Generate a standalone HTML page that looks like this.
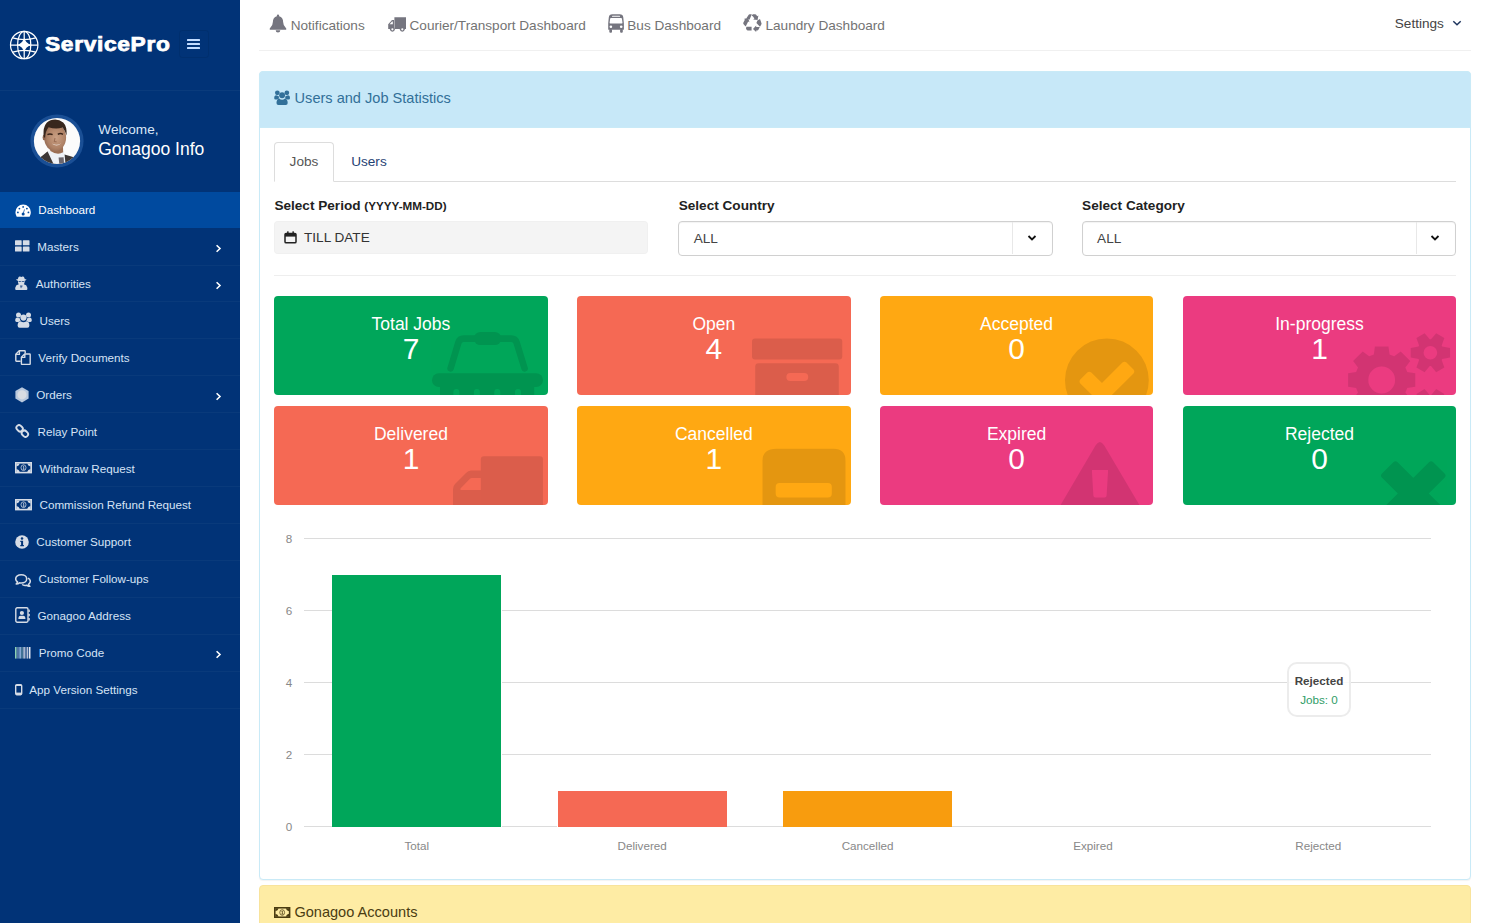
<!DOCTYPE html>
<html lang="en">
<head>
<meta charset="utf-8">
<title>ServicePro Dashboard</title>
<style>
html,body{margin:0;padding:0;background:#fff;}
body{width:1487px;height:923px;overflow:hidden;position:relative;font-family:"Liberation Sans",Arial,Helvetica,sans-serif;}
.b{position:absolute;box-sizing:border-box;display:block;}
.t{position:absolute;white-space:nowrap;margin:0;padding:0;}
aside,header,main,section{display:block;margin:0;padding:0;}
#page{position:absolute;left:0;top:0;width:1487px;height:923px;overflow:hidden;background:#fff;}

.sb{background:#013377;}
.mi{color:#d6e3f5;}
.card{border-radius:4px;overflow:hidden;}

</style>
</head>
<body>
<div id="page">
<aside id="sidebar">
<div class="b" style="left:0.00px;top:0.00px;width:240.00px;height:923.00px;background:#013377;"></div>
<svg class="b" style="left:9.00px;top:29.50px;transform:translate(0.2px,0)" width="30.00" height="30.00" viewBox="-15 -15 30 30">
<g fill="none" stroke="#fff" stroke-width="1.25">
<circle r="13.7"/>
<ellipse rx="6.6" ry="13.7"/>
<path d="M-13.7 0H13.7M0 -13.7V13.7"/>
<path d="M-11.6 -7.2Q0 -3.6 11.6 -7.2M-11.6 7.2Q0 3.6 11.6 7.2"/>
</g>
<path fill="#fff" d="M0 -7.5Q1.3 -1.3 7.5 0Q1.3 1.3 0 7.5Q-1.3 1.3 -7.5 0Q-1.3 -1.3 0 -7.5Z"/>
</svg>
<div class="t " style="left:45.30px;top:30.05px;font-size:20.4px;line-height:28.56px;color:#fff;font-weight:bold;letter-spacing:0.6px;-webkit-text-stroke:0.75px #fff;transform-origin:0 50%;transform:scaleX(1.115);">ServicePro</div>
<div class="b" style="left:179.00px;top:30.00px;width:30.00px;height:28.00px;border:1px solid rgba(0,0,0,0.07);border-radius:3px;"></div>
<div class="b" style="left:186.60px;top:39.30px;width:13.50px;height:2.00px;background:#c2dcff;border-radius:0.5px;"></div>
<div class="b" style="left:186.60px;top:43.30px;width:13.50px;height:2.00px;background:#c2dcff;border-radius:0.5px;"></div>
<div class="b" style="left:186.60px;top:47.30px;width:13.50px;height:2.00px;background:#c2dcff;border-radius:0.5px;"></div>
<div class="b" style="left:0.00px;top:89.60px;width:240.00px;height:1.00px;background:rgba(255,255,255,0.04);"></div>
<svg class="b" style="left:30.00px;top:114.10px;" width="54.00" height="54.00" viewBox="-27 -27 54 54">
<defs><clipPath id="av"><circle r="23.1"/></clipPath>
<radialGradient id="fg" cx="0.55" cy="0.5" r="0.7"><stop offset="0" stop-color="#caa084"/><stop offset="0.55" stop-color="#b08367"/><stop offset="1" stop-color="#7d5744"/></radialGradient></defs>
<circle r="26.6" fill="#1a4f95"/>
<g clip-path="url(#av)">
<rect x="-24" y="-24" width="48" height="48" fill="#fbfbfb"/>
<path d="M-19 24L-17 16.4Q-13 13.4 -9.6 10.4L-2 14L7.4 13.4Q13 14.6 17.6 16.6L20 24Z" fill="#3d3735"/>
<path d="M-9.4 10.6L-5.5 8.6L5.8 9.6L7.6 13.6L8.6 24L-3 24Z" fill="#eef1f6"/>
<path d="M1.6 16.6L6.6 16.2L7.2 24L2.4 24Z" fill="#6d676d"/>
<path d="M-7.6 3L5.8 3L6.2 11.2Q0.4 14.6 -6.6 10Z" fill="#9c6f54"/>
<ellipse cx="-1.9" cy="-3.4" rx="11" ry="13.5" fill="url(#fg)"/>
<ellipse cx="-12.9" cy="-3.6" rx="1.5" ry="2.8" fill="#93674f"/>
<path d="M-13.2 -3.4Q-15 -17.4 -6.4 -20.8Q0.6 -23 6.2 -18.6Q10.2 -14.8 9.6 -5.4Q8.2 -10.2 5.6 -13.4Q-1.6 -11.4 -8.4 -13.8Q-11.4 -10.4 -12 -3.4Z" fill="#38271d"/>
<path d="M-5.4 2.6Q-0.6 5 4.2 2.2Q0 6.6 -5.4 2.6Z" fill="#e9dcd4"/>
<path d="M-9.6 -6.4Q-7 -7.8 -4.4 -6.4M0.8 -6.7Q3.4 -8.1 6 -6.7" stroke="#3a2418" stroke-width="1.5" fill="none"/>
<path d="M-2 -3L-2.8 0.6L-0.4 0.8" stroke="#8f624a" stroke-width="0.8" fill="none"/>
</g>
</svg>
<div class="t " style="left:98.30px;top:120.17px;font-size:13.6px;line-height:19.04px;color:#dbe7f7;">Welcome,</div>
<div class="t " style="left:98.20px;top:136.69px;font-size:17.5px;line-height:24.5px;color:#fff;">Gonagoo Info</div>
<div class="b" style="left:0.00px;top:191.90px;width:240.00px;height:36.20px;background:#004a9f;"></div>
<svg class="b" style="left:14.80px;top:203.80px;" width="16.30" height="13.20" viewBox="0 0 16 13"><path fill="#fff" d="M8 0.6A7.6 7.6 0 0 0 0.4 8.2Q0.4 10.6 1.5 12.2Q1.8 12.6 2.3 12.6H13.7Q14.2 12.6 14.5 12.2Q15.6 10.6 15.6 8.2A7.6 7.6 0 0 0 8 0.6Z"/><g fill="#004a9f"><circle cx="8" cy="2.9" r="0.9"/><circle cx="4.3" cy="4.5" r="0.9"/><circle cx="11.7" cy="4.5" r="0.9"/><circle cx="2.8" cy="8.3" r="0.9"/><circle cx="13.2" cy="8.3" r="0.9"/><circle cx="8" cy="9.9" r="1.5"/><path d="M9 5.2L9.8 5.5L8.5 9.6L7.4 9.3Z" opacity=".7"/></g></svg>
<div class="t " style="left:38.30px;top:202.00px;font-size:11.66px;line-height:16.32px;color:#fff;">Dashboard</div>
<div class="b" style="left:0.00px;top:264.56px;width:240.00px;height:1.00px;background:rgba(255,255,255,0.035);"></div>
<svg class="b" style="left:15.30px;top:240.43px;" width="14.50" height="12.00" viewBox="0 0 15 12"><g fill="#d6dce6"><rect x="0" y="0" width="6.9" height="5.3" rx="0.6"/><rect x="8.1" y="0" width="6.9" height="5.3" rx="0.6"/><rect x="0" y="6.5" width="6.9" height="5.3" rx="0.6"/><rect x="8.1" y="6.5" width="6.9" height="5.3" rx="0.6"/></g></svg>
<div class="t " style="left:37.30px;top:238.93px;font-size:11.66px;line-height:16.32px;color:#d6e3f5;">Masters</div>
<svg class="b" style="left:214.60px;top:244.23px;" width="7.00" height="9.00" viewBox="0 0 7 9"><path d="M1.6 1.2L5 4.5L1.6 7.8" fill="none" stroke="#fff" stroke-width="1.6"/></svg>
<div class="b" style="left:0.00px;top:301.49px;width:240.00px;height:1.00px;background:rgba(255,255,255,0.035);"></div>
<svg class="b" style="left:15.10px;top:276.06px;" width="12.60" height="14.20" viewBox="0 0 12.6 14.2"><g fill="#d6dce6"><path d="M3.6 0.9Q4.3 0.1 5.1 0.6Q6.3 1.2 7.5 0.6Q8.3 0.1 9 0.9L9.9 3.3H11.2Q11.6 3.3 11.4 3.8Q10.6 4.6 9.6 4.8V6.2Q9.6 7.4 8.8 8.2Q11.8 8.8 12.3 11.4L12.4 13Q12.4 14 11.4 14H1.2Q0.2 14 0.2 13L0.3 11.4Q0.8 8.8 3.8 8.2Q3 7.4 3 6.2V4.8Q2 4.6 1.2 3.8Q1 3.3 1.4 3.3H2.7Z"/></g><g fill="#013377"><path d="M3.6 5.1H5.9V6H3.6ZM6.7 5.1H9V6H6.7Z" opacity=".7"/><path d="M5 9.4L5.9 12.6L6.3 10.2L6.7 12.6L7.6 9.4Z" opacity=".75"/></g></svg>
<div class="t " style="left:35.80px;top:275.86px;font-size:11.66px;line-height:16.32px;color:#d6e3f5;">Authorities</div>
<svg class="b" style="left:214.60px;top:281.16px;" width="7.00" height="9.00" viewBox="0 0 7 9"><path d="M1.6 1.2L5 4.5L1.6 7.8" fill="none" stroke="#fff" stroke-width="1.6"/></svg>
<div class="b" style="left:0.00px;top:338.42px;width:240.00px;height:1.00px;background:rgba(255,255,255,0.035);"></div>
<svg class="b" style="left:15.10px;top:312.39px;" width="17.00" height="16.00" viewBox="0 0 17 16"><g fill="#d6dce6"><circle cx="3.5" cy="2.9" r="2.5"/><circle cx="13.5" cy="2.9" r="2.5"/><circle cx="8.5" cy="5.6" r="3.1"/><path d="M0.2 8.6Q0.2 5.6 2.4 5.6Q3.4 6.4 4.9 6.2Q4.8 7.8 5.8 9Q4.4 9 3.6 10H1.6Q0.2 10 0.2 8.6Z"/><path d="M16.8 8.6Q16.8 5.6 14.6 5.6Q13.6 6.4 12.1 6.2Q12.2 7.8 11.2 9Q12.6 9 13.4 10H15.4Q16.8 10 16.8 8.6Z"/><path d="M2.6 13.6Q2.6 9.4 5.6 9.2Q7 10.2 8.5 10.2Q10 10.2 11.4 9.2Q14.4 9.4 14.4 13.6Q14.4 15.8 12.4 15.8H4.6Q2.6 15.8 2.6 13.6Z"/></g></svg>
<div class="t " style="left:39.50px;top:312.79px;font-size:11.66px;line-height:16.32px;color:#d6e3f5;">Users</div>
<div class="b" style="left:0.00px;top:375.35px;width:240.00px;height:1.00px;background:rgba(255,255,255,0.035);"></div>
<svg class="b" style="left:15.00px;top:350.02px;" width="16.00" height="15.20" viewBox="0 0 16 15.2"><g fill="none" stroke="#d6dce6" stroke-width="1.4" stroke-linejoin="round"><path d="M5.6 11.2H1.4Q0.8 11.2 0.8 10.6V4.2L4.2 0.8H9.6Q10.2 0.8 10.2 1.4V3.6"/><path d="M0.9 4.4H4.4V0.9"/><path d="M6.4 7.2L9.6 4H14.6Q15.2 4 15.2 4.6V13.8Q15.2 14.4 14.6 14.4H7Q6.4 14.4 6.4 13.8Z"/><path d="M6.5 7.4H9.8V4.1"/></g></svg>
<div class="t " style="left:38.30px;top:349.72px;font-size:11.66px;line-height:16.32px;color:#d6e3f5;">Verify Documents</div>
<div class="b" style="left:0.00px;top:412.28px;width:240.00px;height:1.00px;background:rgba(255,255,255,0.035);"></div>
<svg class="b" style="left:15.10px;top:387.25px;" width="14.00" height="15.60" viewBox="0 0 14 15.6"><path fill="#b9c8dd" d="M7 0.2L13.6 4V11.6L7 15.4L0.4 11.6V4Z"/><circle cx="7" cy="7.8" r="4.6" fill="#d9dce2"/></svg>
<div class="t " style="left:36.30px;top:386.65px;font-size:11.66px;line-height:16.32px;color:#d6e3f5;">Orders</div>
<svg class="b" style="left:214.60px;top:391.95px;" width="7.00" height="9.00" viewBox="0 0 7 9"><path d="M1.6 1.2L5 4.5L1.6 7.8" fill="none" stroke="#fff" stroke-width="1.6"/></svg>
<div class="b" style="left:0.00px;top:449.21px;width:240.00px;height:1.00px;background:rgba(255,255,255,0.035);"></div>
<svg class="b" style="left:15.30px;top:423.78px;" width="14.50" height="14.00" viewBox="0 0 14.5 14"><g fill="none" stroke="#d6dce6" stroke-width="1.9"><rect x="-3.4" y="-2.6" width="6.8" height="5.2" rx="2.6" transform="translate(4.6 4.3) rotate(45)"/><rect x="-3.4" y="-2.6" width="6.8" height="5.2" rx="2.6" transform="translate(9.9 9.7) rotate(45)"/></g></svg>
<div class="t " style="left:37.50px;top:423.58px;font-size:11.66px;line-height:16.32px;color:#d6e3f5;">Relay Point</div>
<div class="b" style="left:0.00px;top:486.14px;width:240.00px;height:1.00px;background:rgba(255,255,255,0.035);"></div>
<svg class="b" style="left:15.10px;top:462.31px;" width="17.00" height="11.40" viewBox="0 0 17 11.4"><rect x="0.8" y="0.8" width="15.4" height="9.8" fill="none" stroke="#d6dce6" stroke-width="1.6"/><path fill="#d6dce6" d="M1.4 1.4H4.8Q4.2 3.8 1.4 4.4ZM15.6 1.4H12.2Q12.8 3.8 15.6 4.4ZM1.4 10H4.8Q4.2 7.6 1.4 7ZM15.6 10H12.2Q12.8 7.6 15.6 7Z"/><ellipse cx="8.5" cy="5.7" rx="2.5" ry="2.9" fill="none" stroke="#d6dce6" stroke-width="0.9" opacity=".85"/><path d="M7.9 4.6L8.7 4.2V7.2M7.8 7.3H9.5" stroke="#d6dce6" stroke-width="0.8" fill="none"/></svg>
<div class="t " style="left:39.50px;top:460.51px;font-size:11.66px;line-height:16.32px;color:#d6e3f5;">Withdraw Request</div>
<div class="b" style="left:0.00px;top:523.07px;width:240.00px;height:1.00px;background:rgba(255,255,255,0.035);"></div>
<svg class="b" style="left:15.10px;top:499.24px;" width="17.00" height="11.40" viewBox="0 0 17 11.4"><rect x="0.8" y="0.8" width="15.4" height="9.8" fill="none" stroke="#d6dce6" stroke-width="1.6"/><path fill="#d6dce6" d="M1.4 1.4H4.8Q4.2 3.8 1.4 4.4ZM15.6 1.4H12.2Q12.8 3.8 15.6 4.4ZM1.4 10H4.8Q4.2 7.6 1.4 7ZM15.6 10H12.2Q12.8 7.6 15.6 7Z"/><ellipse cx="8.5" cy="5.7" rx="2.5" ry="2.9" fill="none" stroke="#d6dce6" stroke-width="0.9" opacity=".85"/><path d="M7.9 4.6L8.7 4.2V7.2M7.8 7.3H9.5" stroke="#d6dce6" stroke-width="0.8" fill="none"/></svg>
<div class="t " style="left:39.50px;top:497.44px;font-size:11.66px;line-height:16.32px;color:#d6e3f5;">Commission Refund Request</div>
<div class="b" style="left:0.00px;top:560.00px;width:240.00px;height:1.00px;background:rgba(255,255,255,0.035);"></div>
<svg class="b" style="left:15.10px;top:535.07px;" width="14.00" height="14.00" viewBox="0 0 14 14"><circle cx="7" cy="7" r="6.8" fill="#d6dce6"/><g fill="#013377"><circle cx="7" cy="3.5" r="1.25"/><path d="M5.3 5.8H8.1V10H8.9V11.2H5.3V10H6.1V7H5.3Z"/></g></svg>
<div class="t " style="left:36.30px;top:534.37px;font-size:11.66px;line-height:16.32px;color:#d6e3f5;">Customer Support</div>
<div class="b" style="left:0.00px;top:596.93px;width:240.00px;height:1.00px;background:rgba(255,255,255,0.035);"></div>
<svg class="b" style="left:15.10px;top:573.50px;" width="16.00" height="13.00" viewBox="0 0 16 13"><g fill="none" stroke="#d6dce6" stroke-width="1.55" stroke-linejoin="round"><path d="M6.2 0.8C9.3 0.8 11.7 2.6 11.7 4.9C11.7 7.2 9.3 9 6.2 9C5.6 9 5 8.9 4.5 8.8C3.6 9.5 2.4 9.9 1.2 10C2 9.2 2.4 8.5 2.5 7.9C1.4 7.1 0.7 6.1 0.7 4.9C0.7 2.6 3.1 0.8 6.2 0.8Z"/><path d="M12.9 4.1C14.4 4.8 15.3 6 15.3 7.3C15.3 8.5 14.6 9.5 13.5 10.3C13.6 10.9 14 11.6 14.8 12.4C13.6 12.3 12.4 11.9 11.5 11.2C10.3 11.5 8.3 11.4 7.1 10.5"/></g></svg>
<div class="t " style="left:38.50px;top:571.30px;font-size:11.66px;line-height:16.32px;color:#d6e3f5;">Customer Follow-ups</div>
<div class="b" style="left:0.00px;top:633.86px;width:240.00px;height:1.00px;background:rgba(255,255,255,0.035);"></div>
<svg class="b" style="left:15.10px;top:607.43px;" width="15.00" height="16.00" viewBox="0 0 15 16"><rect x="0.8" y="0.8" width="12.2" height="14.4" rx="1.4" fill="none" stroke="#d6dce6" stroke-width="1.4"/><g fill="#d6dce6"><rect x="13.4" y="2.6" width="1.4" height="2.4" rx="0.5"/><rect x="13.4" y="6.8" width="1.4" height="2.4" rx="0.5"/><rect x="13.4" y="11" width="1.4" height="2.4" rx="0.5"/><circle cx="6.9" cy="6" r="2.1"/><path d="M3.4 11.6Q3.4 8.7 5.6 8.7H8.2Q10.4 8.7 10.4 11.6V12H3.4Z"/></g></svg>
<div class="t " style="left:37.50px;top:608.23px;font-size:11.66px;line-height:16.32px;color:#d6e3f5;">Gonagoo Address</div>
<div class="b" style="left:0.00px;top:670.79px;width:240.00px;height:1.00px;background:rgba(255,255,255,0.035);"></div>
<svg class="b" style="left:15.20px;top:646.96px;" width="15.60" height="11.60" viewBox="0 0 15.6 11.6"><rect x="0" y="0" width="1.6" height="11.6" fill="#8fd0b5"/><rect x="2.6" y="0" width="0.8" height="11.6" fill="#c9d6ea"/><rect x="4.3" y="0" width="1.6" height="11.6" fill="#93b4dc"/><rect x="6.6" y="0" width="0.8" height="11.6" fill="#9fd0c0"/><rect x="8.3" y="0" width="1.6" height="11.6" fill="#b8c4d8"/><rect x="10.6" y="0" width="0.8" height="11.6" fill="#d5dae6"/><rect x="12.1" y="0" width="1.1" height="11.6" fill="#c9d0e0"/><rect x="13.9" y="0" width="1.6" height="11.6" fill="#dfe5f0"/></svg>
<div class="t " style="left:38.70px;top:645.16px;font-size:11.66px;line-height:16.32px;color:#d6e3f5;">Promo Code</div>
<svg class="b" style="left:214.60px;top:650.46px;" width="7.00" height="9.00" viewBox="0 0 7 9"><path d="M1.6 1.2L5 4.5L1.6 7.8" fill="none" stroke="#fff" stroke-width="1.6"/></svg>
<div class="b" style="left:0.00px;top:707.72px;width:240.00px;height:1.00px;background:rgba(255,255,255,0.035);"></div>
<svg class="b" style="left:15.20px;top:684.29px;" width="7.40" height="11.40" viewBox="0 0 7.4 11.4"><rect x="0.7" y="0.7" width="6" height="10" rx="1.1" fill="none" stroke="#d6dce6" stroke-width="1.4"/><rect x="1" y="8.6" width="5.4" height="2" fill="#d6dce6"/><rect x="1" y="0.8" width="5.4" height="1.2" fill="#d6dce6"/></svg>
<div class="t " style="left:29.30px;top:682.09px;font-size:11.66px;line-height:16.32px;color:#d6e3f5;">App Version Settings</div>
</aside>
<header id="topnav">
<svg class="b" style="left:268.50px;top:14.00px;" width="18.00" height="19.20" viewBox="0 0 18.6 19.2"><path fill="#75757f" d="M9.3 0.3Q10.5 0.3 10.5 1.5V2Q14.6 3 14.6 8Q14.6 12 17.6 14.4Q18.4 15.2 17.6 16H1Q0.2 15.2 1 14.4Q4 12 4 8Q4 3 8.1 2V1.5Q8.1 0.3 9.3 0.3ZM6.9 16.6H11.7Q11.6 18.9 9.3 18.9Q7 18.9 6.9 16.6Z"/></svg>
<div class="t " style="left:290.70px;top:16.37px;font-size:13.6px;line-height:19.04px;color:#737373;">Notifications</div>
<svg class="b" style="left:387.60px;top:17.00px;" width="18.60" height="15.00" viewBox="0 0 18.6 15"><g fill="#75757f"><path d="M6.4 0.2H17.8Q18.4 0.2 18.4 0.8V11.4Q18.4 12 17.8 12H6.4Z"/><path d="M0.2 7.2L3.6 3.4Q3.9 3.1 4.4 3.1H6V12H0.2Z"/><circle cx="4.4" cy="12.3" r="2.4"/><circle cx="14.3" cy="12.3" r="2.4"/></g><g fill="#fff"><path d="M1.6 7.2L4.1 4.4H4.8V7.2Z"/><circle cx="4.4" cy="12.3" r="1.1"/><circle cx="14.3" cy="12.3" r="1.1"/></g></svg>
<div class="t " style="left:409.50px;top:16.37px;font-size:13.6px;line-height:19.04px;color:#737373;">Courier/Transport Dashboard</div>
<svg class="b" style="left:607.90px;top:14.10px;" width="16.10" height="19.00" viewBox="0 0 16.1 19"><g fill="#75757f"><path d="M4.4 0.2H11.7Q15 0.2 15.3 3.4L15.9 9.6V15.2Q15.9 15.8 15.3 15.8H0.8Q0.2 15.8 0.2 15.2V9.6L0.8 3.4Q1.1 0.2 4.4 0.2Z"/><rect x="1.3" y="15" width="2.7" height="3.8" rx="1"/><rect x="12.1" y="15" width="2.7" height="3.8" rx="1"/></g><g fill="#fff"><path d="M3 3.9H13.1Q13.8 3.9 13.9 4.6L14.5 8.8Q14.6 9.5 13.9 9.5H2.2Q1.5 9.5 1.6 8.8L2.2 4.6Q2.3 3.9 3 3.9Z"/><rect x="4" y="1.7" width="8.1" height="1.1" rx="0.55"/><circle cx="2.9" cy="12.7" r="1.3"/><circle cx="13.2" cy="12.7" r="1.3"/></g></svg>
<div class="t " style="left:627.30px;top:16.37px;font-size:13.6px;line-height:19.04px;color:#737373;">Bus Dashboard</div>
<svg class="b" style="left:743.30px;top:14.00px;" width="18.80" height="17.80" viewBox="0 0 18.8 17.8"><g fill="#75757f"><path d="M3.6 4L5.7 0.8Q6 0.3 6.6 0.3H8.8L6.5 5.7Z"/><path d="M9.8 0.3H12.2Q12.8 0.3 13.2 0.8L14.2 2.2L15.4 1.4L14.6 6L10.2 5.6L11.4 4.6L10 2.6Q9.4 1.8 8.6 1.8Z"/><path d="M14.4 6.4L17 5L18.4 9Q18.8 9.8 18.3 10.6L17 12.8L13.4 9Z"/><path d="M10 14.9L13.2 11.4V13H16.8L15.4 15.8Q15 16.6 14.2 16.6H13.2V18Z"/><path d="M3.4 12.8H8.6V16.6H4.8Q4 16.6 3.6 15.8L3 14.6Z"/><path d="M0.3 8.8L2 5.6L0.8 5L5.2 3.8L6.4 8.2L5.2 7.6L3.2 11.4L2.6 12.6L0.6 10.2Q0 9.6 0.3 8.8Z"/></g></svg>
<div class="t " style="left:765.50px;top:16.37px;font-size:13.6px;line-height:19.04px;color:#737373;">Laundry Dashboard</div>
<div class="t " style="left:1394.80px;top:13.97px;font-size:13.6px;line-height:19.04px;color:#444;">Settings</div>
<svg class="b" style="left:1451.90px;top:19.00px;" width="10.00" height="8.00" viewBox="0 0 10 8"><path d="M1.3 2.2L5 5.7L8.7 2.2" fill="none" stroke="#1f355e" stroke-width="1.5"/></svg>
<div class="b" style="left:259.40px;top:50.00px;width:1212.00px;height:1.40px;background:#f0f0f0;"></div>
</header>
<main id="content">
<section id="stats-panel">
<div class="b" style="left:259.40px;top:70.60px;width:1212.00px;height:809.40px;border:1px solid #c9eaf7;border-radius:4px;background:#fff;box-shadow:0 1px 1px rgba(0,0,0,.05);"></div>
<div class="b" style="left:259.40px;top:70.60px;width:1212.00px;height:57.30px;background:#c7e8f8;border:1px solid #c9eaf7;border-radius:4px 4px 0 0;"></div>
<svg class="b" style="left:274.20px;top:90.40px;" width="16.20" height="15.20" viewBox="0 0 17 16"><g fill="#327099"><circle cx="3.5" cy="2.9" r="2.5"/><circle cx="13.5" cy="2.9" r="2.5"/><circle cx="8.5" cy="5.6" r="3.1"/><path d="M0.2 8.6Q0.2 5.6 2.4 5.6Q3.4 6.4 4.9 6.2Q4.8 7.8 5.8 9Q4.4 9 3.6 10H1.6Q0.2 10 0.2 8.6Z"/><path d="M16.8 8.6Q16.8 5.6 14.6 5.6Q13.6 6.4 12.1 6.2Q12.2 7.8 11.2 9Q12.6 9 13.4 10H15.4Q16.8 10 16.8 8.6Z"/><path d="M2.6 13.6Q2.6 9.4 5.6 9.2Q7 10.2 8.5 10.2Q10 10.2 11.4 9.2Q14.4 9.4 14.4 13.6Q14.4 15.8 12.4 15.8H4.6Q2.6 15.8 2.6 13.6Z"/></g></svg>
<div class="t " style="left:294.60px;top:87.75px;font-size:14.57px;line-height:20.4px;color:#327099;">Users and Job Statistics</div>
<div class="b" style="left:274.20px;top:181.00px;width:1181.40px;height:1.00px;background:#dddddd;"></div>
<div class="b" style="left:274.20px;top:141.60px;width:59.60px;height:40.40px;border:1px solid #ddd;border-bottom:1px solid #fff;border-radius:4px 4px 0 0;background:#fff;"></div>
<div class="t " style="left:289.60px;top:151.97px;font-size:13.6px;line-height:19.04px;color:#555;">Jobs</div>
<div class="t " style="left:351.20px;top:151.97px;font-size:13.6px;line-height:19.04px;color:#1f4273;">Users</div>
<div class="t " style="left:274.40px;top:196.47px;font-size:13.6px;line-height:19.04px;color:#222;font-weight:bold;">Select Period <span style="font-size:11.66px">(YYYY-MM-DD)</span></div>
<div class="b" style="left:274.20px;top:221.00px;width:374.20px;height:32.80px;background:#f4f4f4;border-radius:4px;box-shadow:inset 0 0 0 1px rgba(0,0,0,0.015);"></div>
<svg class="b" style="left:284.20px;top:231.20px;" width="13.00" height="12.60" viewBox="0 0 13 12.6"><rect x="1" y="2.4" width="11" height="9.4" rx="1.1" fill="none" stroke="#222" stroke-width="1.5"/><rect x="1" y="2.4" width="11" height="3.2" fill="#222"/><rect x="3.1" y="0.3" width="1.5" height="3" rx="0.5" fill="#222"/><rect x="8.4" y="0.3" width="1.5" height="3" rx="0.5" fill="#222"/></svg>
<div class="t " style="left:304.00px;top:227.77px;font-size:13.6px;line-height:19.04px;color:#333;">TILL DATE</div>
<div class="t " style="left:678.70px;top:196.47px;font-size:13.6px;line-height:19.04px;color:#222;font-weight:bold;">Select Country</div>
<div class="b" style="left:678.30px;top:221.30px;width:374.30px;height:34.60px;border:1.2px solid #d0d0d0;border-radius:4px;background:#fff;box-shadow:inset 0 1px 1px rgba(0,0,0,.05);"></div>
<div class="b" style="left:1012.40px;top:222.40px;width:1.00px;height:32.00px;background:#e8e8e8;"></div>
<div class="t " style="left:693.70px;top:228.77px;font-size:13.6px;line-height:19.04px;color:#444;">ALL</div>
<svg class="b" style="left:1027.00px;top:233.60px;" width="10.00" height="8.00" viewBox="0 0 10 8"><path d="M1.5 2L5 5.5L8.5 2" fill="none" stroke="#111" stroke-width="1.8"/></svg>
<div class="t " style="left:1082.10px;top:196.47px;font-size:13.6px;line-height:19.04px;color:#222;font-weight:bold;">Select Category</div>
<div class="b" style="left:1081.70px;top:221.30px;width:374.10px;height:34.60px;border:1.2px solid #d0d0d0;border-radius:4px;background:#fff;box-shadow:inset 0 1px 1px rgba(0,0,0,.05);"></div>
<div class="b" style="left:1415.60px;top:222.40px;width:1.00px;height:32.00px;background:#e8e8e8;"></div>
<div class="t " style="left:1097.10px;top:228.77px;font-size:13.6px;line-height:19.04px;color:#444;">ALL</div>
<svg class="b" style="left:1430.20px;top:233.60px;" width="10.00" height="8.00" viewBox="0 0 10 8"><path d="M1.5 2L5 5.5L8.5 2" fill="none" stroke="#111" stroke-width="1.8"/></svg>
<div class="b" style="left:274.20px;top:275.00px;width:1181.40px;height:1.20px;background:#eeeeee;"></div>
<div class="b card" style="left:274.00px;top:295.70px;width:273.90px;height:99.20px;background:#00a65a;"><svg class="b" style="left:0;top:0" width="273.90" height="99.20" viewBox="0 0 273.90 99.20"><g opacity="0.105"><path d="M176.6 72.4L184.4 46.5Q185.6 42.6 189.6 42.6H237.4Q241.4 42.6 242.6 46.5L250.6 72.4" fill="none" stroke="#000" stroke-width="6.6" stroke-linecap="round" stroke-linejoin="round"/><rect x="199.9" y="35.9" width="27.4" height="13.2" rx="6.6" fill="#000"/><rect x="158" y="77.3" width="111" height="13.7" rx="6.8" fill="#000"/><path fill="#000" fill-rule="evenodd" d="M166 90H260.2V101H166ZM179.4 101V96Q179.4 93 182.4 93Q185.4 93 185.4 96V101ZM199.9 101V96Q199.9 93 202.9 93Q205.9 93 205.9 96V101ZM220.3 101V96Q220.3 93 223.3 93Q226.3 93 226.3 96V101ZM241.0 101V96Q241.0 93 244.0 93Q247.0 93 247.0 96V101Z"/></g></svg><div class="t " style="left:-63.05px;width:400px;text-align:center;top:16.49px;font-size:17.5px;line-height:24.5px;color:#fff;">Total Jobs</div><div class="t " style="left:-63.05px;width:400px;text-align:center;top:32.61px;font-size:29.9px;line-height:41.86px;color:#fff;">7</div></div>
<div class="b card" style="left:577.00px;top:295.70px;width:273.80px;height:99.20px;background:#f56954;"><svg class="b" style="left:0;top:0" width="273.80" height="99.20" viewBox="0 0 273.80 99.20"><g fill="rgba(0,0,0,0.105)"><rect x="175" y="42.4" width="90.3" height="21.2" rx="3"/><path d="M178.2 70.6Q178.2 67.2 181.6 67.2H258.4Q261.8 67.2 261.8 70.6V100H178.2ZM213.4 77.1Q209.4 77.1 209.4 81.1Q209.4 85.1 213.4 85.1H227.2Q231.2 85.1 231.2 81.1Q231.2 77.1 227.2 77.1Z" fill-rule="evenodd"/></g></svg><div class="t " style="left:-63.10px;width:400px;text-align:center;top:16.49px;font-size:17.5px;line-height:24.5px;color:#fff;">Open</div><div class="t " style="left:-63.10px;width:400px;text-align:center;top:32.61px;font-size:29.9px;line-height:41.86px;color:#fff;">4</div></div>
<div class="b card" style="left:880.00px;top:295.70px;width:273.10px;height:99.20px;background:#ffa812;"><svg class="b" style="left:0;top:0" width="273.10" height="99.20" viewBox="0 0 273.10 99.20"><path fill="rgba(0,0,0,0.105)" fill-rule="evenodd" d="M226.9 42.4A41.9 41.9 0 1 0 226.9 126.2A41.9 41.9 0 1 0 226.9 42.4ZM246.5 66.4L253.5 73.4Q255 75.4 253.5 77.4L224 106.9Q222 108.4 220 106.9L200.3 87.4Q198.8 85.4 200.3 83.4L207.3 76.4Q209.3 74.9 211.3 76.4L222 87.1L242.5 66.4Q244.5 64.9 246.5 66.4Z"/></svg><div class="t " style="left:-63.45px;width:400px;text-align:center;top:16.49px;font-size:17.5px;line-height:24.5px;color:#fff;">Accepted</div><div class="t " style="left:-63.45px;width:400px;text-align:center;top:32.61px;font-size:29.9px;line-height:41.86px;color:#fff;">0</div></div>
<div class="b card" style="left:1183.00px;top:295.70px;width:273.00px;height:99.20px;background:#eb3b80;"><svg class="b" style="left:0;top:0" width="273.00" height="99.20" viewBox="0 0 273.00 99.20"><path fill="rgba(0,0,0,0.105)" fill-rule="evenodd" stroke="rgba(0,0,0,0.105)" stroke-width="0" stroke-linejoin="round" d="M224.3 76.1L232.3 77.2L232.3 90.8L224.3 91.9L222.4 96.5L227.3 103.0L217.7 112.6L211.2 107.7L206.6 109.6L205.5 117.6L191.9 117.6L190.8 109.6L186.2 107.7L179.7 112.6L170.1 103.0L175.0 96.5L173.1 91.9L165.1 90.8L165.1 77.2L173.1 76.1L175.0 71.5L170.1 65.0L179.7 55.4L186.2 60.3L190.8 58.4L191.9 50.4L205.5 50.4L206.6 58.4L211.2 60.3L217.7 55.4L227.3 65.0L222.4 71.5ZM212.1 84.0A13.4 13.4 0 1 0 185.3 84.0A13.4 13.4 0 1 0 212.1 84.0ZM259.3 50.5L267.1 52.0L267.1 61.4L259.3 62.9L258.7 63.9L261.4 71.4L253.2 76.2L248.0 70.1L246.8 70.1L241.6 76.2L233.4 71.4L236.1 63.9L235.5 62.9L227.7 61.4L227.7 52.0L235.5 50.5L236.1 49.5L233.4 42.0L241.6 37.2L246.8 43.3L248.0 43.3L253.2 37.2L261.4 42.0L258.7 49.5ZM254.2 56.7A6.8 6.8 0 1 0 240.6 56.7A6.8 6.8 0 1 0 254.2 56.7ZM259.3 106.4L267.1 107.9L267.1 117.3L259.3 118.8L258.7 119.8L261.4 127.3L253.2 132.1L248.0 126.0L246.8 126.0L241.6 132.1L233.4 127.3L236.1 119.8L235.5 118.8L227.7 117.3L227.7 107.9L235.5 106.4L236.1 105.4L233.4 97.9L241.6 93.1L246.8 99.2L248.0 99.2L253.2 93.1L261.4 97.9L258.7 105.4ZM254.2 112.6A6.8 6.8 0 1 0 240.6 112.6A6.8 6.8 0 1 0 254.2 112.6Z"/></svg><div class="t " style="left:-63.50px;width:400px;text-align:center;top:16.49px;font-size:17.5px;line-height:24.5px;color:#fff;">In-progress</div><div class="t " style="left:-63.50px;width:400px;text-align:center;top:32.61px;font-size:29.9px;line-height:41.86px;color:#fff;">1</div></div>
<div class="b card" style="left:274.00px;top:405.60px;width:273.90px;height:99.30px;background:#f56954;"><svg class="b" style="left:0;top:0" width="273.90" height="99.30" viewBox="0 0 273.90 99.30"><g fill="rgba(0,0,0,0.105)"><path d="M209.8 50.2H266Q269 50.2 269 53.2V100H206.8V53.2Q206.8 50.2 209.8 50.2Z"/><path fill-rule="evenodd" d="M179 95V83Q179 80 181 78L192 67Q194 64.5 197 64.5H206.8V100H179ZM186.5 84H206.8V72H198Q196.8 72 196 72.8L186.5 82.4Z"/></g></svg><div class="t " style="left:-63.05px;width:400px;text-align:center;top:16.49px;font-size:17.5px;line-height:24.5px;color:#fff;">Delivered</div><div class="t " style="left:-63.05px;width:400px;text-align:center;top:32.61px;font-size:29.9px;line-height:41.86px;color:#fff;">1</div></div>
<div class="b card" style="left:577.00px;top:405.60px;width:273.80px;height:99.30px;background:#ffa812;"><svg class="b" style="left:0;top:0" width="273.80" height="99.30" viewBox="0 0 273.80 99.30"><path fill="rgba(0,0,0,0.105)" fill-rule="evenodd" d="M199.5 42.7H256.5Q268.5 42.7 268.5 54.7V100H185.5V54.7Q185.5 42.7 199.5 42.7ZM202.7 77.1Q198.7 77.1 198.7 81.1V87.4Q198.7 91.4 202.7 91.4H250.8Q254.8 91.4 254.8 87.4V81.1Q254.8 77.1 250.8 77.1Z"/></svg><div class="t " style="left:-63.10px;width:400px;text-align:center;top:16.49px;font-size:17.5px;line-height:24.5px;color:#fff;">Cancelled</div><div class="t " style="left:-63.10px;width:400px;text-align:center;top:32.61px;font-size:29.9px;line-height:41.86px;color:#fff;">1</div></div>
<div class="b card" style="left:880.00px;top:405.60px;width:273.10px;height:99.30px;background:#eb3b80;"><svg class="b" style="left:0;top:0" width="273.10" height="99.30" viewBox="0 0 273.10 99.30"><path fill="rgba(0,0,0,0.105)" fill-rule="evenodd" d="M215.5 39.5Q219.9 32.5 224.3 39.5L260 100H180ZM212 63.9H228V66L226.6 89.5Q226.5 91.4 224.6 91.4H215.4Q213.5 91.4 213.4 89.5L212 66Z"/></svg><div class="t " style="left:-63.45px;width:400px;text-align:center;top:16.49px;font-size:17.5px;line-height:24.5px;color:#fff;">Expired</div><div class="t " style="left:-63.45px;width:400px;text-align:center;top:32.61px;font-size:29.9px;line-height:41.86px;color:#fff;">0</div></div>
<div class="b card" style="left:1183.00px;top:405.60px;width:273.00px;height:99.30px;background:#00a65a;"><svg class="b" style="left:0;top:0" width="273.00" height="99.30" viewBox="0 0 273.00 99.30"><g opacity="0.105" transform="translate(230.3 87.5)"><path fill="#000" stroke="#000" stroke-width="6.0" stroke-linejoin="round" d="M0.00 -11.31L17.82 -29.13L29.13 -17.82L11.31 0.00L29.13 17.82L17.82 29.13L0.00 11.31L-17.82 29.13L-29.13 17.82L-11.31 0.00L-29.13 -17.82L-17.82 -29.13Z"/></g></svg><div class="t " style="left:-63.50px;width:400px;text-align:center;top:16.49px;font-size:17.5px;line-height:24.5px;color:#fff;">Rejected</div><div class="t " style="left:-63.50px;width:400px;text-align:center;top:32.61px;font-size:29.9px;line-height:41.86px;color:#fff;">0</div></div>
<div class="b" style="left:304.10px;top:826.30px;width:1126.90px;height:1.20px;background:#dcdcdc;"></div>
<div class="t " style="left:-107.80px;width:400px;text-align:right;top:818.90px;font-size:11.66px;line-height:16.32px;color:#888;">0</div>
<div class="b" style="left:304.10px;top:754.24px;width:1126.90px;height:1.20px;background:#dcdcdc;"></div>
<div class="t " style="left:-107.80px;width:400px;text-align:right;top:746.84px;font-size:11.66px;line-height:16.32px;color:#888;">2</div>
<div class="b" style="left:304.10px;top:682.18px;width:1126.90px;height:1.20px;background:#dcdcdc;"></div>
<div class="t " style="left:-107.80px;width:400px;text-align:right;top:674.78px;font-size:11.66px;line-height:16.32px;color:#888;">4</div>
<div class="b" style="left:304.10px;top:610.12px;width:1126.90px;height:1.20px;background:#dcdcdc;"></div>
<div class="t " style="left:-107.80px;width:400px;text-align:right;top:602.72px;font-size:11.66px;line-height:16.32px;color:#888;">6</div>
<div class="b" style="left:304.10px;top:538.06px;width:1126.90px;height:1.20px;background:#dcdcdc;"></div>
<div class="t " style="left:-107.80px;width:400px;text-align:right;top:530.66px;font-size:11.66px;line-height:16.32px;color:#888;">8</div>
<div class="b" style="left:331.97px;top:574.39px;width:169.64px;height:252.51px;background:#fff;"></div>
<div class="b" style="left:332.27px;top:574.69px;width:169.04px;height:252.21px;background:#00a65a;"></div>
<div class="t " style="left:216.79px;width:400px;text-align:center;top:837.70px;font-size:11.66px;line-height:16.32px;color:#888;">Total</div>
<div class="b" style="left:557.35px;top:790.57px;width:169.64px;height:36.33px;background:#fff;"></div>
<div class="b" style="left:557.65px;top:790.87px;width:169.04px;height:36.03px;background:#f56954;"></div>
<div class="t " style="left:442.17px;width:400px;text-align:center;top:837.70px;font-size:11.66px;line-height:16.32px;color:#888;">Delivered</div>
<div class="b" style="left:782.73px;top:790.57px;width:169.64px;height:36.33px;background:#fff;"></div>
<div class="b" style="left:783.03px;top:790.87px;width:169.04px;height:36.03px;background:#f89c0e;"></div>
<div class="t " style="left:667.55px;width:400px;text-align:center;top:837.70px;font-size:11.66px;line-height:16.32px;color:#888;">Cancelled</div>
<div class="t " style="left:892.93px;width:400px;text-align:center;top:837.70px;font-size:11.66px;line-height:16.32px;color:#888;">Expired</div>
<div class="t " style="left:1118.31px;width:400px;text-align:center;top:837.70px;font-size:11.66px;line-height:16.32px;color:#888;">Rejected</div>
<div class="b" style="left:1287.00px;top:661.60px;width:64.00px;height:55.40px;background:rgba(255,255,255,0.85);border:2px solid #ececec;border-radius:10px;"></div>
<div class="t " style="left:1119.00px;width:400px;text-align:center;top:672.70px;font-size:11.66px;line-height:16.32px;color:#444;font-weight:bold;">Rejected</div>
<div class="t " style="left:1119.00px;width:400px;text-align:center;top:692.10px;font-size:11.66px;line-height:16.32px;color:#2f9d68;">Jobs: 0</div>
</section>
<section id="accounts-panel">
<div class="b" style="left:259.40px;top:885.40px;width:1212.00px;height:60.00px;background:#feeca4;border:1px solid #f8e39c;border-radius:4px 4px 0 0;"></div>
<svg class="b" style="left:274.20px;top:906.80px;" width="16.40" height="11.00" viewBox="0 0 17 11.4"><rect x="0.8" y="0.8" width="15.4" height="9.8" fill="none" stroke="#4a3c12" stroke-width="1.6"/><path fill="#4a3c12" d="M1.4 1.4H4.8Q4.2 3.8 1.4 4.4ZM15.6 1.4H12.2Q12.8 3.8 15.6 4.4ZM1.4 10H4.8Q4.2 7.6 1.4 7ZM15.6 10H12.2Q12.8 7.6 15.6 7Z"/><ellipse cx="8.5" cy="5.7" rx="2.5" ry="2.9" fill="none" stroke="#4a3c12" stroke-width="0.9" opacity=".85"/><path d="M7.9 4.6L8.7 4.2V7.2M7.8 7.3H9.5" stroke="#4a3c12" stroke-width="0.8" fill="none"/></svg>
<div class="t " style="left:294.40px;top:902.35px;font-size:14.57px;line-height:20.4px;color:#4a3c12;">Gonagoo Accounts</div>
</section>
</main>
</div>
</body>
</html>
